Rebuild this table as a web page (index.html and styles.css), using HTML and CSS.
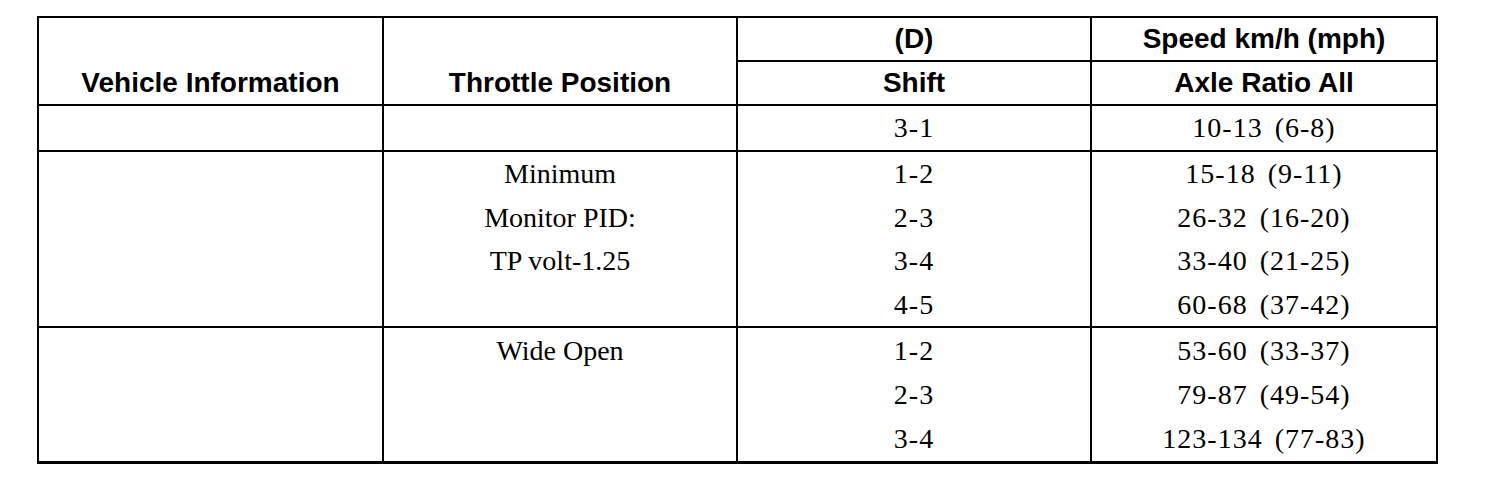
FILE: index.html
```html
<!DOCTYPE html>
<html>
<head>
<meta charset="utf-8">
<link rel="stylesheet" href="styles.css">
</head>
<body>
<table class="shift-table">
  <colgroup>
    <col class="c1"><col class="c2"><col class="c3"><col class="c4">
  </colgroup>
  <thead>
    <tr class="h1">
      <th rowspan="2" class="bottom">Vehicle Information</th>
      <th rowspan="2" class="bottom">Throttle Position</th>
      <th>(D)</th>
      <th>Speed km/h (mph)</th>
    </tr>
    <tr class="h2">
      <th>Shift</th>
      <th>Axle Ratio All</th>
    </tr>
  </thead>
  <tbody>
    <tr class="r1">
      <td></td>
      <td></td>
      <td class="num">3-1</td>
      <td class="num">10-13 (6-8)</td>
    </tr>
    <tr class="g2">
      <td></td>
      <td>Minimum<br>Monitor PID:<br>TP volt-1.25</td>
      <td class="num">1-2<br>2-3<br>3-4<br>4-5</td>
      <td class="num">15-18 (9-11)<br>26-32 (16-20)<br>33-40 (21-25)<br>60-68 (37-42)</td>
    </tr>
    <tr class="g3">
      <td></td>
      <td>Wide Open</td>
      <td class="num">1-2<br>2-3<br>3-4</td>
      <td class="num">53-60 (33-37)<br>79-87 (49-54)<br>123-134 (77-83)</td>
    </tr>
  </tbody>
</table>
</body>
</html>
```

FILE: styles.css
```css
html, body {
  margin: 0;
  padding: 0;
  background: #fff;
}
body {
  padding: 16px 0 0 37px;
}
.shift-table {
  border-collapse: separate;
  border-spacing: 0;
  table-layout: fixed;
  width: 1401px;
  border-top: 2px solid #000;
  border-left: 2px solid #000;
  color: #000;
}
.c1 { width: 345px; }
.c2 { width: 354px; }
.c3 { width: 354px; }
.c4 { width: 346px; }
.shift-table th,
.shift-table td {
  border-right: 2px solid #000;
  border-bottom: 2px solid #000;
  padding: 0;
  text-align: center;
  vertical-align: top;
}
.shift-table th {
  font-family: "Liberation Sans", Arial, sans-serif;
  font-weight: bold;
  font-size: 28px;
  line-height: 42px;
  height: 42px;
  vertical-align: middle;
}
.shift-table th.bottom {
  vertical-align: bottom;
}
.shift-table td {
  font-family: "Liberation Serif", "Times New Roman", serif;
  font-size: 28px;
}
.shift-table td.num {
  letter-spacing: 1px;
  word-spacing: 4px;
}
.r1 td {
  line-height: 44px;
  height: 44px;
}
.g2 td {
  line-height: 43.5px;
  height: 174px;
}
.g3 td {
  line-height: 44px;
  height: 132px;
  padding-top: 1px;
  border-bottom-width: 3px;
}
```
